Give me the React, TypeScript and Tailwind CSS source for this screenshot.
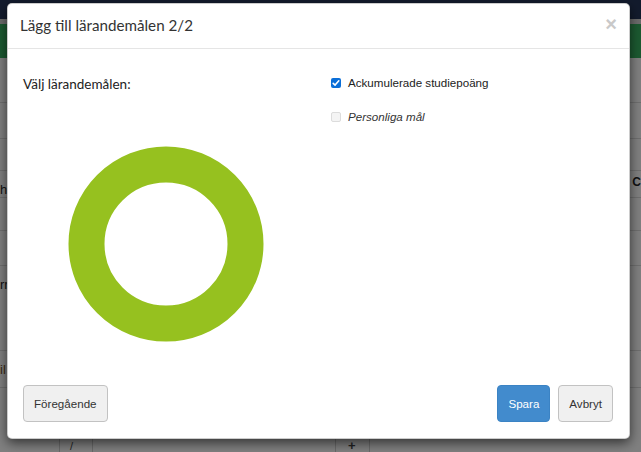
import React from "react";

const Checkbox: React.FC<{ checked?: boolean; disabled?: boolean }> = ({
  checked,
  disabled,
}) => {
  if (checked) {
    return (
      <span className="flex h-[10px] w-[10px] items-center justify-center rounded-[2px] bg-[#0b6fd8]">
        <svg width="8" height="8" viewBox="0 0 8 8">
          <path
            d="M1.2 4.3 L3.1 6.1 L6.8 1.8"
            fill="none"
            stroke="#fff"
            strokeWidth="1.6"
            strokeLinecap="round"
            strokeLinejoin="round"
          />
        </svg>
      </span>
    );
  }
  return (
    <span
      className={
        disabled
          ? "block h-[10px] w-[10px] rounded-[2px] border border-[#dcdcdc] bg-[#f4f4f4]"
          : "block h-[10px] w-[10px] rounded-[2px] border border-[#767676] bg-white"
      }
    />
  );
};

const BackgroundPage: React.FC = () => {
  const rowLines = [102, 138, 170, 197, 230, 265, 350, 387];
  return (
    <div className="absolute inset-0 bg-[#808080]">
      <div className="h-[19px] bg-[#131b2d]" />
      <div className="h-[5px] bg-[#6c6c6c]" />
      <div className="h-[34px] bg-[#1c5a31]" />
      {rowLines.map((y) => (
        <div
          key={y}
          className="absolute left-0 right-0 h-px bg-[#6f6f6f]"
          style={{ top: y }}
        />
      ))}
      <div className="absolute left-0 top-[180px] text-[13px] text-[#111]">he</div>
      <div className="absolute left-0 top-[275px] text-[13px] text-[#111]">rr</div>
      <div className="absolute left-0 top-[360px] text-[13px] text-[#3a2a10]">il</div>
      <div className="absolute right-[0px] top-[173px] text-[12px] font-bold text-[#111]">C</div>
      <div className="absolute bottom-0 left-[59px] top-[430px] w-px bg-[#6a6a6a]" />
      <div className="absolute bottom-0 left-[92px] top-[430px] w-px bg-[#6a6a6a]" />
      <div className="absolute bottom-0 left-[335px] top-[430px] w-px bg-[#6a6a6a]" />
      <div className="absolute bottom-0 left-[369px] top-[430px] w-px bg-[#6a6a6a]" />
      <div className="absolute left-[70px] top-[438px] text-[11px] text-[#222]">/</div>
      <div className="absolute left-[348px] top-[436px] text-[13px] font-bold text-[#222]">+</div>
    </div>
  );
};

const App: React.FC = () => {
  return (
    <div
      className="relative h-[452px] w-[641px] overflow-hidden"
      style={{ fontFamily: '"Liberation Sans", Arial, sans-serif' }}
    >
      <BackgroundPage />

      <div className="absolute left-[7px] top-[3px] flex h-[436px] w-[623px] flex-col rounded-[5px] border border-[#00000033] bg-white shadow-[0_4px_12px_rgba(0,0,0,0.6)]">
        <div className="flex h-[45px] items-center justify-between border-b border-[#e5e5e5] pl-[12px] pr-[12px]">
          <h4
            className="text-[15.2px] leading-none text-[#333]"
            style={{ fontFamily: 'Lato, "Open Sans", sans-serif' }}
          >
            Lägg till lärandemålen 2/2
          </h4>
          <button className="-mt-[4px] text-[20px] font-bold leading-none text-[#c9c9c9]">
            ×
          </button>
        </div>

        <div className="grid flex-1 grid-cols-[286px_1fr] gap-x-[22px] px-[15px] pt-[26px]">
          <div className="flex flex-col">
            <div
              className="text-[13.5px] leading-[18px] text-[#222]"
              style={{ fontFamily: 'Lato, "Open Sans", sans-serif' }}
            >
              Välj lärandemålen:
            </div>
            <div className="mt-[53px] flex justify-center">
              <svg width="196" height="196" viewBox="0 0 196 196">
                <circle
                  cx="98"
                  cy="98"
                  r="79.5"
                  fill="none"
                  stroke="#96c11f"
                  strokeWidth="36"
                />
              </svg>
            </div>
          </div>

          <div className="flex flex-col gap-[18px] text-[11.6px] leading-[16px] text-[#222]">
            <label className="flex items-center gap-[7px]">
              <Checkbox checked />
              <span>Ackumulerade studiepoäng</span>
            </label>
            <label className="flex items-center gap-[7px]">
              <Checkbox disabled />
              <span className="italic text-[#333]">Personliga mål</span>
            </label>
          </div>
        </div>

        <div className="flex items-center justify-between pb-[16px] pl-[15px] pr-[16px]">
          <button className="h-[37px] rounded-[4px] border border-[#c2c2c2] bg-[#f0f0f0] px-[10px] text-[11.6px] text-[#333]">
            Föregående
          </button>
          <div className="flex gap-[8px]">
            <button className="h-[37px] rounded-[4px] border border-[#3b83c4] bg-[#428bcd] px-[10px] text-[11.6px] text-white">
              Spara
            </button>
            <button className="h-[37px] rounded-[4px] border border-[#c2c2c2] bg-[#f0f0f0] px-[10px] text-[11.6px] text-[#333]">
              Avbryt
            </button>
          </div>
        </div>
      </div>
    </div>
  );
};

export default App;
